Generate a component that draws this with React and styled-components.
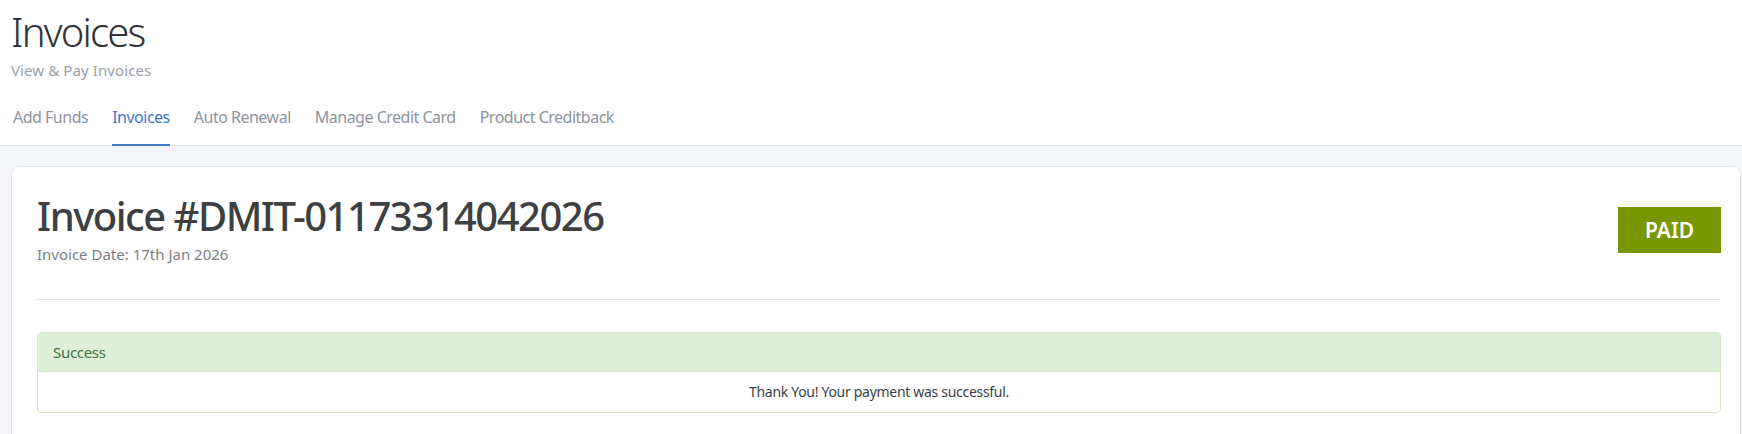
import React from "react";
import styled, { createGlobalStyle } from "styled-components";

const GlobalStyle = createGlobalStyle`
  html, body {
    margin: 0;
    padding: 0;
    background: #f5f6fa;
    font-family: "Noto Sans", "Open Sans", Arial, sans-serif;
  }
`;

const tabs = [
  "Add Funds",
  "Invoices",
  "Auto Renewal",
  "Manage Credit Card",
  "Product Creditback",
];

const App = () => {
  return (
    <>
      <GlobalStyle />
      <PageHeader>
        <PageTitle>Invoices</PageTitle>
        <PageSubtitle>View &amp; Pay Invoices</PageSubtitle>
        <TabBar>
          {tabs.map((t) => (
            <Tab key={t} active={t === "Invoices"}>
              {t}
            </Tab>
          ))}
        </TabBar>
      </PageHeader>
      <Main>
        <Card>
          <CardHead>
            <div>
              <InvoiceTitle>Invoice #DMIT-01173314042026</InvoiceTitle>
              <InvoiceDate>Invoice Date: 17th Jan 2026</InvoiceDate>
            </div>
            <StatusBadge>PAID</StatusBadge>
          </CardHead>
          <Divider />
          <Panel>
            <PanelHeading>Success</PanelHeading>
            <PanelBody>Thank You! Your payment was successful.</PanelBody>
          </Panel>
        </Card>
      </Main>
    </>
  );
};

export default App;

const PageHeader = styled.header`
  background: #fff;
  border-bottom: 1px solid #e1e4e9;
  padding: 8px 11px 0;
`;

const PageTitle = styled.h1`
  margin: 0;
  font-size: 40px;
  line-height: 48px;
  font-weight: 300;
  color: #2f3237;
  letter-spacing: -1.8px;
`;

const PageSubtitle = styled.p`
  margin: 4px 0 0;
  font-size: 15px;
  line-height: 21px;
  color: #9a9ea6;
  letter-spacing: 0.1px;
`;

const TabBar = styled.nav`
  display: flex;
  gap: 24px;
  margin: 24px 0 -1px 2px;
`;

const Tab = styled.a`
  display: block;
  padding-bottom: 15px;
  font-size: 16px;
  line-height: 24px;
  letter-spacing: -0.5px;
  color: ${(p) => (p.active ? "#3f77c8" : "#8d939c")};
  border-bottom: 2px solid ${(p) => (p.active ? "#3f77c8" : "transparent")};
  cursor: pointer;
`;

const Main = styled.main`
  padding: 20px 1px 0 11px;
`;

const Card = styled.section`
  background: #fff;
  border: 1px solid #e3e7ed;
  border-radius: 8px;
  padding: 25px 19px 30px 25px;
`;

const CardHead = styled.div`
  display: flex;
  justify-content: space-between;
  align-items: flex-start;
`;

const InvoiceTitle = styled.h2`
  margin: 0;
  font-size: 40px;
  line-height: 48px;
  font-weight: 500;
  color: #3d3f42;
  letter-spacing: -1.5px;
`;

const InvoiceDate = styled.div`
  margin-top: 4px;
  font-size: 15px;
  line-height: 21px;
  color: #7b7e83;
`;

const StatusBadge = styled.span`
  margin-top: 15px;
  width: 103px;
  height: 46px;
  display: flex;
  align-items: center;
  justify-content: center;
  background: #789600;
  color: #fff;
  font-size: 21px;
  font-weight: 600;
`;

const Divider = styled.hr`
  margin: 34px 0 32px;
  border: 0;
  border-top: 1px solid #e1e6ec;
`;

const Panel = styled.div`
  border: 1px solid #d6e9c6;
  border-radius: 4px;
  overflow: hidden;
`;

const PanelHeading = styled.div`
  padding: 9px 15px;
  line-height: 20px;
  font-size: 15px;
  color: #3c763d;
  background: #dff0d8;
  border-bottom: 1px solid #d6e9c6;
  letter-spacing: -0.3px;
`;

const PanelBody = styled.div`
  padding: 10px 15px;
  line-height: 20px;
  font-size: 14px;
  color: #3b3f45;
  text-align: center;
  letter-spacing: -0.3px;
`;
